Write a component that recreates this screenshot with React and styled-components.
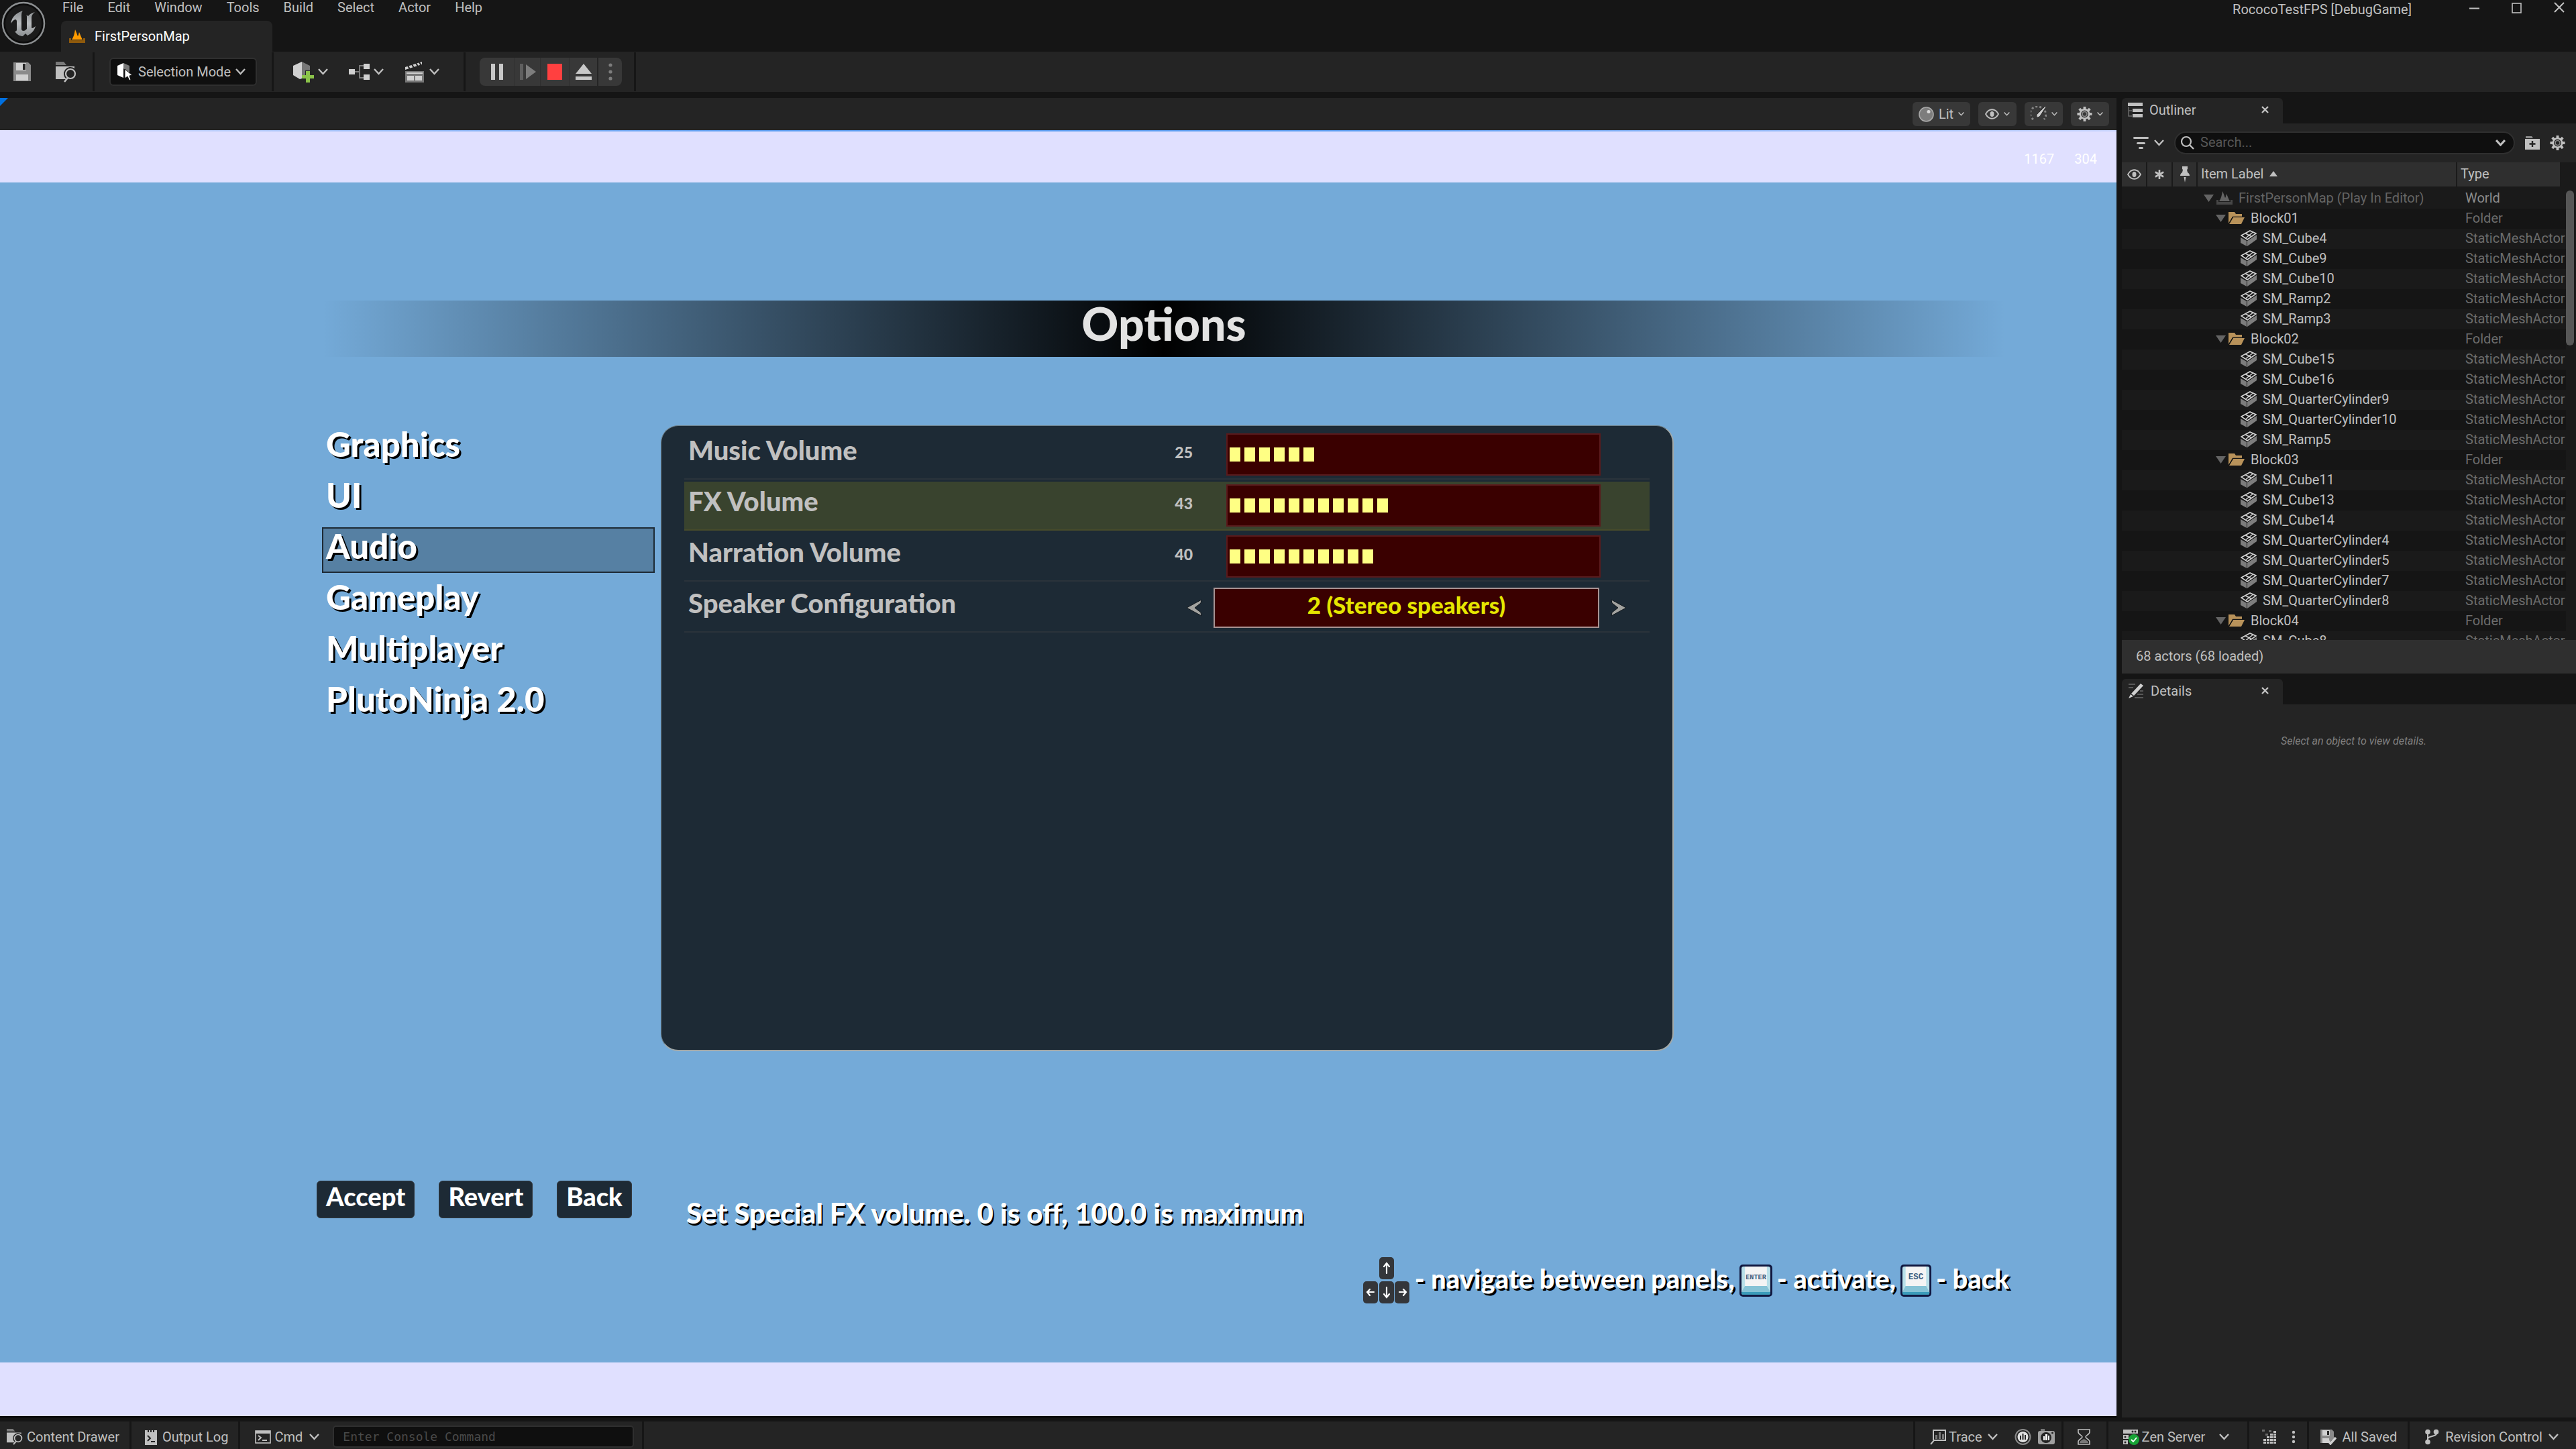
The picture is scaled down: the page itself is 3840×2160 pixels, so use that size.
import styled, { createGlobalStyle, css } from "styled-components"

const GRAY = "#c0c0c0"

const meshes = (names) => names.map((name) => ({ kind: "mesh", name, type: "StaticMeshActor" }))
const folder = (name) => ({ kind: "folder", name, type: "Folder" })

const actors = [
    { kind: "world", name: "FirstPersonMap (Play In Editor)", type: "World" },
    folder("Block01"),
    ...meshes(["SM_Cube4", "SM_Cube9", "SM_Cube10", "SM_Ramp2", "SM_Ramp3"]),
    folder("Block02"),
    ...meshes(["SM_Cube15", "SM_Cube16", "SM_QuarterCylinder9", "SM_QuarterCylinder10", "SM_Ramp5"]),
    folder("Block03"),
    ...meshes([
        "SM_Cube11", "SM_Cube13", "SM_Cube14", "SM_QuarterCylinder4",
        "SM_QuarterCylinder5", "SM_QuarterCylinder7", "SM_QuarterCylinder8",
    ]),
    folder("Block04"),
    ...meshes(["SM_Cube8"]),
]

const sliders = [
    { id: "music", label: "Music Volume", value: 25, bars: 6 },
    { id: "fx", label: "FX Volume", value: 43, bars: 11, active: true },
    { id: "narration", label: "Narration Volume", value: 40, bars: 10 },
]

const menu = ["File", "Edit", "Window", "Tools", "Build", "Select", "Actor", "Help"]
const pages = ["Graphics", "UI", "Audio", "Gameplay", "Multiplayer", "PlutoNinja 2.0"]

export default function App() {
    return (
        <>
            <GlobalStyle />
            <Editor>
                <TitleBar>
                    <LogoCell><UnrealLogo /></LogoCell>
                    <TitleLeft>
                        <MenuBar>
                            {menu.map((m) => <MenuItem key={m} type="button">{m}</MenuItem>)}
                        </MenuBar>
                        <LevelTab type="button">
                            <LevelIcon color="#ff9c00" base="#8f5a0c" />
                            FirstPersonMap
                        </LevelTab>
                    </TitleLeft>
                    <ProjectName>RococoTestFPS [DebugGame]</ProjectName>
                    <WindowControls>
                        <button type="button" aria-label="Minimize">
                            <svg width="15" height="20"><path d="M0 10.5h15" stroke={GRAY} strokeWidth="2" /></svg>
                        </button>
                        <button type="button" aria-label="Maximize">
                            <svg width="15" height="20"><rect x="1" y="3" width="13" height="14" fill="none" stroke={GRAY} strokeWidth="1.6" /></svg>
                        </button>
                        <button type="button" aria-label="Close">
                            <svg width="16" height="20"><path d="M1 2l14 14M15 2L1 16" stroke={GRAY} strokeWidth="2" /></svg>
                        </button>
                    </WindowControls>
                </TitleBar>

                <Toolbar>
                    <ToolGroup $left={20} $right={24} $gap={37}>
                        <button type="button" aria-label="Save"><SaveIcon /></button>
                        <button type="button" aria-label="Browse"><BrowseIcon /></button>
                    </ToolGroup>
                    <ToolGroup $left={22} $right={22}>
                        <ModeButton type="button">
                            <ModeIcon />
                            <span>Selection Mode</span>
                            <Chevron />
                        </ModeButton>
                    </ToolGroup>
                    <ToolGroup $left={29} $right={36} $gap={31}>
                        <ToolButton type="button" aria-label="Add"><AddIcon /><Chevron /></ToolButton>
                        <ToolButton type="button" aria-label="Blueprints"><BlueprintIcon /><Chevron /></ToolButton>
                        <ToolButton type="button" aria-label="Cinematics"><ClapperIcon /><Chevron /></ToolButton>
                    </ToolGroup>
                    <ToolGroup $left={21} $right={18}>
                        <PlayControls>
                            <PlayButton type="button" aria-label="Pause" $width={52}>
                                <svg width="18" height="24"><path d="M0 0h6v24H0zM12 0h6v24h-6z" fill="#c8c8c8" /></svg>
                            </PlayButton>
                            <PlayButton type="button" aria-label="Step" $width={38}>
                                <svg width="24" height="24"><path d="M0 0h5v24H0z" fill="#5f5f5f" /><path d="M9 1v22l15-11z" fill="#7d7d7d" /></svg>
                            </PlayButton>
                            <PlayButton type="button" aria-label="Stop" $width={43}>
                                <svg width="22" height="24"><rect width="22" height="24" fill="#ff4040" /></svg>
                            </PlayButton>
                            <PlayButton type="button" aria-label="Eject" $width={42}>
                                <svg width="24" height="24"><path d="M12 0l12 15H0zM0 19h24v5H0z" fill="#c8c8c8" /></svg>
                            </PlayButton>
                            <PlayButton type="button" aria-label="More" $width={37}>
                                <svg width="6" height="28"><g fill="#7d7d7d"><circle cx="3" cy="4" r="2.6" /><circle cx="3" cy="14" r="2.6" /><circle cx="3" cy="24" r="2.6" /></g></svg>
                            </PlayButton>
                        </PlayControls>
                    </ToolGroup>
                </Toolbar>

                <Workspace>
                    <Viewport>
                        <ViewportBar>
                            <svg width="12" height="12"><path d="M0 0h12L0 12z" fill="#0070e0" /></svg>
                            <ViewOptions>
                                <ViewButton type="button" $width={86}><LitIcon />Lit<Chevron small /></ViewButton>
                                <ViewButton type="button" $width={57} aria-label="Show"><EyeIcon /><Chevron small /></ViewButton>
                                <ViewButton type="button" $width={57} aria-label="Performance"><GaugeIcon /><Chevron small /></ViewButton>
                                <ViewButton type="button" $width={57} aria-label="Viewport settings"><GearIcon /><Chevron small /></ViewButton>
                            </ViewOptions>
                        </ViewportBar>
                        <Letterbox $top>
                            <span>1167</span>
                            <span>304</span>
                        </Letterbox>
                        <GameScreen>
                            <Banner>Options</Banner>
                            <OptionsBody>
                                <PageNav>
                                    {pages.map((p) => (
                                        <PageButton key={p} type="button" $selected={p === "Audio"}>{p}</PageButton>
                                    ))}
                                </PageNav>
                                <OptionsPanel>
                                    {sliders.map((s) => (
                                        <OptionRow key={s.id} $active={s.active}>
                                            <label htmlFor={s.id}>{s.label}</label>
                                            <OptionValue>{s.value}</OptionValue>
                                            <VolumeSlider id={s.id} type="range" min="0" max="100" defaultValue={s.value} $bars={s.bars} />
                                        </OptionRow>
                                    ))}
                                    <OptionRow>
                                        <label htmlFor="speakers">Speaker Configuration</label>
                                        <button type="button" aria-label="Previous">
                                            <svg width="24" height="26"><path d="M23 1L1 13l22 12-1-5-9-7 9-7z" fill="#a3a3a0" stroke="#12181d" strokeWidth="1" /></svg>
                                        </button>
                                        <Choice id="speakers">2 (Stereo speakers)</Choice>
                                        <button type="button" aria-label="Next">
                                            <svg width="24" height="26"><path d="M1 1l22 12L1 25l1-5 9-7-9-7z" fill="#a3a3a0" stroke="#12181d" strokeWidth="1" /></svg>
                                        </button>
                                    </OptionRow>
                                </OptionsPanel>
                            </OptionsBody>
                            <ScreenFooter>
                                <FooterButtons>
                                    <GameButton type="button">Accept</GameButton>
                                    <GameButton type="button">Revert</GameButton>
                                    <GameButton type="button">Back</GameButton>
                                </FooterButtons>
                                <Description>Set Special FX volume. 0 is off, 100.0 is maximum</Description>
                            </ScreenFooter>
                            <Hints>
                                <ArrowKeys />
                                <span>- navigate between panels,</span>
                                <KeyCap label="ENTER" />
                                <span>- activate,</span>
                                <KeyCap label="ESC" />
                                <span>- back</span>
                            </Hints>
                        </GameScreen>
                        <Letterbox />
                    </Viewport>

                    <SidePanels>
                        <Panel>
                            <PanelTab>
                                <OutlinerIcon />
                                <span>Outliner</span>
                                <CloseButton />
                            </PanelTab>
                            <SearchRow>
                                <FilterButton type="button" aria-label="Filter">
                                    <svg width="23" height="19" fill={GRAY}><rect width="23" height="3" rx="1.5" /><rect x="5" y="8" width="13" height="3" rx="1.5" /><rect x="8" y="15" width="7" height="3" rx="1.5" /></svg>
                                    <Chevron />
                                </FilterButton>
                                <SearchBox>
                                    <svg width="22" height="22"><circle cx="9" cy="9" r="7" fill="none" stroke={GRAY} strokeWidth="2.2" /><path d="M14 14l6 6" stroke={GRAY} strokeWidth="2.4" /></svg>
                                    <input type="text" placeholder="Search..." aria-label="Search actors" />
                                    <Chevron bold />
                                </SearchBox>
                                <button type="button" aria-label="New folder"><NewFolderIcon /></button>
                                <button type="button" aria-label="Outliner settings"><GearIcon /></button>
                            </SearchRow>
                            <ActorList>
                                <ActorTable>
                                    <colgroup>
                                        <col width="38" /><col width="38" /><col width="37" /><col width="387" /><col />
                                    </colgroup>
                                    <thead>
                                        <tr>
                                            <IconHead aria-label="Visibility"><EyeIcon /></IconHead>
                                            <IconHead aria-label="Unsaved">
                                                <svg width="14" height="14" viewBox="0 0 16 16"><path d="M8 0v16M1 4l14 8M15 4L1 12" stroke={GRAY} strokeWidth="3" /></svg>
                                            </IconHead>
                                            <IconHead aria-label="Pinned">
                                                <svg width="14" height="24" fill={GRAY}><path d="M3 0h8v4l-1 1 1 4c2 1 3 3 3 5H0c0-2 1-4 3-5l1-4-1-1zM5.500 16h3L7 24z" /></svg>
                                            </IconHead>
                                            <TextHead>Item Label <svg width="12" height="8"><path d="M6 0l6 8H0z" fill={GRAY} /></svg></TextHead>
                                            <TextHead>Type</TextHead>
                                        </tr>
                                    </thead>
                                    <tbody>
                                        {actors.map((a) => (
                                            <tr key={a.name}>
                                                <td /><td /><td />
                                                <td>
                                                    <ActorName $kind={a.kind}>
                                                        {a.kind !== "mesh" && <svg width="15" height="11"><path d="M0 0h15L7.500 11z" fill="#646464" /></svg>}
                                                        {a.kind === "world" && <LevelIcon color="#646464" base="#464646" />}
                                                        {a.kind === "folder" && <FolderIcon />}
                                                        {a.kind === "mesh" && <MeshIcon />}
                                                        <span>{a.name}</span>
                                                    </ActorName>
                                                </td>
                                                <ActorType $bright={a.kind === "world"}>{a.type}</ActorType>
                                            </tr>
                                        ))}
                                    </tbody>
                                </ActorTable>
                                <ScrollTrack><ScrollThumb /></ScrollTrack>
                            </ActorList>
                            <ActorCount>68 actors (68 loaded)</ActorCount>
                        </Panel>
                        <Panel>
                            <PanelTab>
                                <DetailsIcon />
                                <span>Details</span>
                                <CloseButton />
                            </PanelTab>
                            <DetailsBody>Select an object to view details.</DetailsBody>
                        </Panel>
                    </SidePanels>
                </Workspace>

                <StatusBar>
                    <StatusGroup $left={10} $right={15}>
                        <StatusButton type="button"><BrowseIcon size={24} />Content Drawer</StatusButton>
                    </StatusGroup>
                    <StatusGroup $left={20} $right={15}>
                        <StatusButton type="button" $gap={8}><LogIcon />Output Log</StatusButton>
                    </StatusGroup>
                    <StatusGroup $left={22} $right={12} $gap={20}>
                        <StatusButton type="button" $gap={5}><CmdIcon />Cmd<ChevronGap /><Chevron /></StatusButton>
                        <ConsoleInput type="text" placeholder="Enter Console Command" aria-label="Console command" />
                    </StatusGroup>
                    <Spacer />
                    <StatusGroup $left={22} $right={10} $gap={10}>
                        <StatusButton type="button" $gap={4}><TraceIcon />Trace<ChevronGap /><Chevron /></StatusButton>
                        <ChevronGap $size={5} />
                        <button type="button" aria-label="Record trace"><RecordIcon /></button>
                        <button type="button" aria-label="Trace snapshot"><SnapshotIcon /></button>
                    </StatusGroup>
                    <StatusGroup $left={21} $right={24}>
                        <button type="button" aria-label="Pending work"><HourglassIcon /></button>
                    </StatusGroup>
                    <StatusGroup $left={22} $right={27}>
                        <StatusButton type="button" $gap={4}><ServerIcon />Zen Server<ChevronGap $size={13} /><Chevron /></StatusButton>
                    </StatusGroup>
                    <StatusGroup $left={19} $right={17} $gap={22}>
                        <button type="button" aria-label="Derived data"><PixelsIcon /></button>
                        <button type="button" aria-label="More">
                            <svg width="6" height="20" fill={GRAY}><circle cx="3" cy="3" r="2.2" /><circle cx="3" cy="10" r="2.2" /><circle cx="3" cy="17" r="2.2" /></svg>
                        </button>
                    </StatusGroup>
                    <StatusGroup $left={17} $right={16}>
                        <StatusButton type="button" $gap={8}><SavedIcon />All Saved</StatusButton>
                    </StatusGroup>
                    <StatusGroup $left={22} $right={26} $last>
                        <StatusButton type="button" $gap={9}><BranchIcon />Revision Control<Chevron /></StatusButton>
                    </StatusGroup>
                </StatusBar>
            </Editor>
        </>
    )
}

function Chevron({ small, bold }) {
    const w = small ? 9 : 15
    const h = small ? 6 : 10
    return (
        <svg width={w} height={h} viewBox="0 0 15 10">
            <path d="M1 1l6.500 7L14 1" fill="none" stroke={GRAY} strokeWidth={bold ? 3.2 : 2.4} />
        </svg>
    )
}

function CloseButton() {
    return (
        <TabClose type="button" aria-label="Close tab">
            <svg width="11" height="11"><path d="M1 1l9 9M10 1l-9 9" stroke={GRAY} strokeWidth="2.400" /></svg>
        </TabClose>
    )
}

function UnrealLogo() {
    return (
        <svg width="66" height="66" viewBox="0 0 66 66">
            <defs>
                <linearGradient id="metal" x1="0" y1="0" x2="0" y2="1">
                    <stop offset="0" stopColor="#8b8f92" />
                    <stop offset="0.5" stopColor="#b9bcbe" />
                    <stop offset="1" stopColor="#8b8f92" />
                </linearGradient>
            </defs>
            <circle cx="33" cy="33" r="31" fill="#0d0d0d" stroke="#8c8f91" strokeWidth="2.500" />
            <circle cx="33" cy="33" r="27" fill="#1b1b1b" />
            <path
                d="M32 14c-9 3-16 8-18 19 3-4 5-6 7-6 1 0 2 1 2 3v12c0 2-1 3-3 3 4 5 8 7 12 7l4-4 3 3c6-3 10-7 12-14-2 2-4 3-5 3s-1-1-1-2V24c0-3 2-6 5-8-4 1-8 3-10 6l-3-2c1 1 1 2 1 4v17c-2 2-3 3-5 3s-3-1-3-3V23c0-4 0-7 2-9z"
                fill="url(#metal)"
            />
        </svg>
    )
}

function LevelIcon({ color, base }) {
    return (
        <svg width="24" height="20" viewBox="0 0 24 20">
            <path d="M4 15C7 11 8 6 9 0c2 4 3 8 4 10 1-1 1-3 2-6 2 4 3 8 5 11z" fill={color} />
            <path d="M0 13h3v3h18v-3h3v7H0z" fill={base} />
        </svg>
    )
}

function SaveIcon() {
    return (
        <svg width="26" height="28" viewBox="0 0 26 28">
            <path d="M0 0h22l4 4v24H0z" fill="#8a8a8a" />
            <path d="M4 1h15v11H4zM4 18h18v9H4z" fill="#d0d0d0" />
            <path d="M14 2h4v9h-4z" fill="#242424" />
        </svg>
    )
}

function BrowseIcon({ size = 31 }) {
    return (
        <svg width={size} height={size} viewBox="0 0 31 31">
            <path d="M0 5V0h12l4 5z" fill="#7a7a7a" />
            <path d="M0 7h28v3a10 10 0 0 0-12 16H0z" fill={GRAY} />
            <circle cx="22" cy="18" r="7" fill="none" stroke={GRAY} strokeWidth="2.200" />
            <path d="M18 24l-5 6" stroke={GRAY} strokeWidth="2.600" />
        </svg>
    )
}

function ModeIcon() {
    return (
        <svg width="24" height="26" viewBox="0 0 24 26">
            <path d="M0 4L9 0v22l-9-4z" fill="#fff" />
            <path d="M9 0l9 4v12L9 8z" fill="#777" />
            <path d="M11 9v14l4-3 3 6 2-1-2-6 4-1z" fill="#fff" stroke="#0f0f0f" strokeWidth="1" />
        </svg>
    )
}

function AddIcon() {
    return (
        <svg width="31" height="31" viewBox="0 0 31 31">
            <path d="M0 6l13-6v25l-3 1L0 20z" fill="#d0d0d0" />
            <path d="M13 0l12 6v7h-7v7h-5z" fill="#777" />
            <path d="M19 14h6v6h6v5h-6v6h-6v-6h-6v-5h6z" fill="#8bc34a" />
        </svg>
    )
}

function BlueprintIcon() {
    return (
        <svg width="31" height="24" viewBox="0 0 31 24">
            <path d="M9 12h6M22 3h-6v18h6" fill="none" stroke="#808080" strokeWidth="1.800" />
            <path d="M0 8h9v8H0zM22 0h9v8h-9zM22 16h9v8h-9z" fill="#d0d0d0" />
        </svg>
    )
}

function ClapperIcon() {
    return (
        <svg width="31" height="31" viewBox="0 0 31 31">
            <path d="M1 8l25-8v4L1 12z" fill="#d0d0d0" />
            <path d="M5 6l3 5M11 4l3 5M17 2l3 5M22 1l3 5" stroke="#242424" strokeWidth="2" />
            <path d="M1 14h28v17H1z" fill="#777" />
            <path d="M3 16h24v2H3zM4 21h10v7H4zM16 21h10v7H16z" fill="#d0d0d0" />
        </svg>
    )
}

function LitIcon() {
    return (
        <svg width="23" height="23" viewBox="0 0 23 23">
            <circle cx="11.500" cy="11.500" r="10.500" fill="#7d7d7d" stroke="#a8a8a8" strokeWidth="1.600" />
            <circle cx="15" cy="7.500" r="2.500" fill="#dadada" />
        </svg>
    )
}

function EyeIcon() {
    return (
        <svg width="21" height="16" viewBox="0 0 21 16">
            <path d="M1 8c5-9 14-9 19 0-5 9-14 9-19 0z" fill="none" stroke={GRAY} strokeWidth="1.800" />
            <ellipse cx="10.500" cy="8" rx="3" ry="4" fill={GRAY} />
        </svg>
    )
}

function GaugeIcon() {
    return (
        <svg width="24" height="24" viewBox="0 0 24 24">
            <path d="M4 20A10.500 10.500 0 0 1 16 2.500M21 7a10.500 10.500 0 0 1-1 13" fill="none" stroke="#858585" strokeWidth="3" strokeDasharray="3 3" />
            <path d="M22 1L10 13v3l3-1z" fill="#d0d0d0" stroke="#d0d0d0" />
        </svg>
    )
}

function GearIcon() {
    const teeth = [0, 45, 90, 135, 180, 225, 270, 315]
    return (
        <svg width="23" height="24" viewBox="-12 -12 24 24">
            {teeth.map((t) => <rect key={t} x="-2" y="-11.500" width="4" height="5" fill={GRAY} transform={`rotate(${t})`} />)}
            <circle r="7" fill="none" stroke={GRAY} strokeWidth="2.600" />
            <circle r="3.600" fill="none" stroke="#8a8a8a" strokeWidth="1.600" />
        </svg>
    )
}

function OutlinerIcon() {
    return (
        <svg width="22" height="22" viewBox="0 0 22 22">
            <path d="M1 6v14h5M1 12h5" fill="none" stroke="#6a6a6a" strokeWidth="1.500" />
            <path d="M0 0h22v5H0zM7 9h15v5H7zM7 17h15v5H7z" fill={GRAY} />
        </svg>
    )
}

function DetailsIcon() {
    return (
        <svg width="24" height="22" viewBox="0 0 24 22">
            <path d="M1 1h10M1 6h7M18 11h5M14 16h9M10 21h13" stroke="#6a6a6a" strokeWidth="1.600" />
            <path d="M19 0l4 3L9 18l-4-3zM4 16l4 3-7 3z" fill="#d0d0d0" />
        </svg>
    )
}

function NewFolderIcon() {
    return (
        <svg width="22" height="20" viewBox="0 0 22 20">
            <path d="M1 0h9l2 3H1z" fill="#8a8a8a" />
            <path d="M0 4h22v16H0z" fill={GRAY} />
            <path d="M11 7v9M6.500 11.500h9" stroke="#242424" strokeWidth="2.400" />
        </svg>
    )
}

function FolderIcon() {
    return (
        <svg width="24" height="18" viewBox="0 0 24 18">
            <path d="M0 17V0h9l2 3h9v4H6z" fill="#b8925a" />
            <path d="M7 8h17l-5 10H1z" fill="#b8925a" />
            <path d="M1 17L6.500 7.400H22" fill="none" stroke="#151515" strokeWidth="1.200" />
        </svg>
    )
}

function MeshIcon() {
    return (
        <svg width="24" height="24" viewBox="0 0 24 24">
            <path d="M0 11l9 5v8l-9-5zM10 16l14-9v7l-14 10z" fill="#7d7d7d" />
            <path d="M1 8L14 1l9 4-13 9zM7 4.800l9 4.700M8 11.500l10-8" fill="none" stroke="#d0d0d0" strokeWidth="1.600" />
        </svg>
    )
}

function LogIcon() {
    return (
        <svg width="18" height="24" viewBox="0 0 18 24">
            <path d="M0 2h18v22H0z" fill={GRAY} />
            <path d="M5 0v5M9 0v5M13 0v5" stroke="#242424" strokeWidth="2" />
            <path d="M4 10l4 4-4 4M9 19h6" fill="none" stroke="#242424" strokeWidth="2" />
        </svg>
    )
}

function CmdIcon() {
    return (
        <svg width="24" height="20" viewBox="0 0 24 20">
            <rect x="1" y="1" width="22" height="18" fill="none" stroke={GRAY} strokeWidth="1.600" />
            <path d="M1 1h22v4H1z" fill={GRAY} />
            <path d="M5 8l4 3-4 4M11 15h7" fill="none" stroke={GRAY} strokeWidth="2" />
        </svg>
    )
}

function TraceIcon() {
    return (
        <svg width="24" height="24" viewBox="0 0 24 24">
            <path d="M5 17V2h18v15H6L1 23" fill="none" stroke={GRAY} strokeWidth="2" />
            <path d="M8 9h3v6H8zM13 5h3v10h-3zM18 8h3v7h-3z" fill="#777" />
        </svg>
    )
}

function RecordIcon() {
    return (
        <svg width="25" height="24" viewBox="0 0 25 24">
            <circle cx="12.500" cy="12" r="11" fill="none" stroke="#8a8a8a" strokeWidth="2" />
            <circle cx="12.500" cy="12" r="8" fill="#e0e0e0" />
            <path d="M8 10h2v6H8zM11.500 7h2v9h-2zM15 9h2v7h-2z" fill="#242424" />
        </svg>
    )
}

function SnapshotIcon() {
    return (
        <svg width="25" height="24" viewBox="0 0 25 24">
            <path d="M4 0h6v3H4z" fill="#777" />
            <rect y="3" width="25" height="20" rx="3" fill="#a0a0a0" />
            <circle cx="12" cy="13" r="8" fill="#242424" />
            <path d="M8 11h2v6H8zM11 8h3v9h-3zM15 10h2v7h-2z" fill="#fff" />
            <circle cx="21.500" cy="6" r="1.500" fill="#242424" />
        </svg>
    )
}

function HourglassIcon() {
    return (
        <svg width="19" height="24" viewBox="0 0 19 24">
            <path d="M1 1h17v4c0 3-6 5-6 7s6 4 6 7v4H1v-4c0-3 6-5 6-7S1 8 1 5z" fill="none" stroke={GRAY} strokeWidth="1.600" />
            <path d="M3 21c0-3 3-4 6.500-6 3.500 2 6.500 3 6.500 6z" fill="#777" />
        </svg>
    )
}

function ServerIcon() {
    return (
        <svg width="24" height="24" viewBox="0 0 24 24">
            <path d="M0 1h22v6H0zM0 9h8v6H0zM0 17h7v6H0z" fill={GRAY} />
            <circle cx="14" cy="4" r="1.500" fill="#242424" /><circle cx="18" cy="4" r="1.500" fill="#242424" />
            <circle cx="3" cy="12" r="1.500" fill="#242424" /><circle cx="3" cy="20" r="1.500" fill="#242424" />
            <circle cx="16" cy="16" r="8" fill="#17a336" />
            <path d="M12 16l3 3 5-6" fill="none" stroke="#fff" strokeWidth="1.800" />
        </svg>
    )
}

function PixelsIcon() {
    const rows = [[1, 1, 1, 1], [1, 1, 1, 1], [0, 1, 1, 1], [0, 0, 1, 1], [0, 0, 0, 1]]
    return (
        <svg width="22" height="24" viewBox="0 0 22 24">
            {rows.map((row, y) => row.map((on, x) => (
                on ? <rect key={`${x}-${y}`} x={2 + x * 5} y={19 - y * 4} width="4" height="3" fill={GRAY} /> : null
            )))}
            <path d="M0 1h4v3H0zM5 7h4v3H5zM10 2h4v3h-4z" fill="#6a6a6a" />
        </svg>
    )
}

function SavedIcon() {
    return (
        <svg width="24" height="24" viewBox="0 0 24 24">
            <path d="M0 1h17l3 3v10l-7 7H0z" fill="#8a8a8a" />
            <path d="M3 2h11v8H3zM3 14h10v7H3z" fill="#d0d0d0" />
            <path d="M10 3h3v6h-3z" fill="#242424" />
            <path d="M11 17l4 5 8-9" fill="none" stroke="#d0d0d0" strokeWidth="3.400" />
        </svg>
    )
}

function BranchIcon() {
    return (
        <svg width="22" height="24" viewBox="0 0 22 24">
            <path d="M5 5v15M18 5v2c0 5-13 3-13 8" fill="none" stroke={GRAY} strokeWidth="2" />
            <circle cx="5" cy="4.500" r="3.800" fill={GRAY} /><circle cx="17.500" cy="4.500" r="3.800" fill={GRAY} /><circle cx="5" cy="19.500" r="3.800" fill={GRAY} />
        </svg>
    )
}

function ArrowKeys() {
    return (
        <svg width="70" height="69" viewBox="0 0 70 69">
            <g fill="#34363a">
                <rect x="24" y="0" width="22" height="33" rx="5" />
                <rect x="0" y="36" width="22" height="33" rx="5" />
                <rect x="24" y="36" width="22" height="33" rx="5" />
                <rect x="47" y="36" width="22" height="33" rx="5" />
            </g>
            <g fill="none" stroke="#fff" strokeWidth="2.200" strokeLinecap="round">
                <path d="M35 24V10M31 14l4-5 4 5" />
                <path d="M35 45v14M31 55l4 5 4-5" />
                <path d="M16 52H7M10 48l-4 4 4 5" />
                <path d="M54 52h9M60 48l4 4-4 5" />
            </g>
        </svg>
    )
}

function KeyCap({ label }) {
    const wide = label.length > 3
    return (
        <svg width={wide ? 49 : 46} height="50" viewBox="0 0 48 50" preserveAspectRatio="none">
            <rect x="0" y="1" width="48" height="48" rx="5" fill="#10173f" />
            <rect x="3" y="4" width="42" height="42" rx="3" fill="#b9e0e9" />
            <path d="M8 4h32v29H8z" fill="#f4f4f4" />
            <path d="M8 33h32l5 9v1H3v-1z" fill="#86c3d6" />
            <path d="M3 42h42v2a2 2 0 0 1-2 2H5a2 2 0 0 1-2-2z" fill="#3b9cba" />
            <text x="24" y="23" textAnchor="middle" fontFamily="Liberation Mono, monospace" fontWeight="700" fontSize={wide ? 10 : 13} fill="#3d5f80">{label}</text>
        </svg>
    )
}

const GlobalStyle = createGlobalStyle`
    * {
        box-sizing: border-box;
    }
    body {
        margin: 0;
        background: #151515;
        color: ${GRAY};
        font-family: Roboto, sans-serif;
        font-size: 20px;
        line-height: 24px;
    }
    button, input {
        font: inherit;
        color: inherit;
    }
    button {
        display: flex;
        align-items: center;
        padding: 0;
        border: none;
        background: none;
        white-space: nowrap;
    }
    svg {
        display: block;
        flex: none;
    }
`

const Editor = styled.div`
    display: flex;
    flex-direction: column;
    height: 100vh;
    overflow: hidden;
`

const TitleBar = styled.header`
    display: flex;
    align-items: flex-start;
    height: 77px;
    flex: none;
    padding-right: 17px;
`
const LogoCell = styled.div`
    width: 91px;
    padding: 2px;
`
const TitleLeft = styled.div`
    flex: 1;
`
const MenuBar = styled.nav`
    display: flex;
    gap: 36px;
    height: 31px;
    padding-left: 2px;
`
const MenuItem = styled.button`
    height: 22px;
`
const LevelTab = styled.button`
    width: 315px;
    height: 46px;
    gap: 14px;
    padding-left: 12px;
    border-radius: 8px 8px 0 0;
    background: #242424;
    color: #fff;
`
const ProjectName = styled.div`
    line-height: 28px;
    margin-right: 86px;
`
const WindowControls = styled.div`
    display: flex;
    gap: 48px;
    padding-top: 2px;
`

const Toolbar = styled.div`
    display: flex;
    flex: none;
    height: 60px;
    padding: 1px 0;
    background: #242424;
`
const ToolGroup = styled.div`
    display: flex;
    align-items: center;
    gap: ${(p) => p.$gap || 0}px;
    padding: 0 ${(p) => p.$right}px 0 ${(p) => p.$left}px;
    border-right: 3px solid #161616;
`
const ToolButton = styled.button`
    gap: 6px;
`
const ModeButton = styled.button`
    width: 220px;
    height: 42px;
    gap: 7px;
    padding-left: 10px;
    border: 2px solid #2f2f2f;
    border-radius: 6px;
    background: #0f0f0f;
`
const PlayControls = styled.div`
    display: flex;
    height: 42px;
    border-radius: 8px;
    background: #383838;
`
const PlayButton = styled.button`
    justify-content: center;
    width: ${(p) => p.$width}px;
    & + & {
        border-left: 1px solid #2f2f2f;
    }
    &:last-child {
        border-left: 2px solid #242424;
    }
`

const Workspace = styled.main`
    display: flex;
    gap: 8px;
    flex: 1;
    min-height: 0;
    padding: 9px 0 6px;
`
const Viewport = styled.section`
    display: flex;
    flex-direction: column;
    flex: 1;
    min-width: 0;
    border-bottom: 2px solid #000;
`
const ViewportBar = styled.div`
    display: flex;
    justify-content: space-between;
    flex: none;
    height: 48px;
    background: #242424;
`
const ViewOptions = styled.div`
    display: flex;
    align-items: center;
    gap: 12px;
    padding-right: 11px;
`
const ViewButton = styled.button`
    justify-content: center;
    gap: 7px;
    width: ${(p) => p.$width}px;
    height: 36px;
    border-radius: 6px;
    background: #383838;
`
const Letterbox = styled.div`
    display: flex;
    justify-content: flex-end;
    align-items: center;
    gap: 30px;
    flex: none;
    height: 80px;
    padding-right: 29px;
    background: #e0e0ff;
    color: #fff;
    ${(p) => p.$top && css`
        height: 78px;
        padding-top: 6px;
        border-top: 2px solid;
        border-image: linear-gradient(to right, #e0e0ff, #5c9df0 35%, #5c9df0 65%, #c8d4ff) 1;
    `}
`

/* in-game options screen */
const GameScreen = styled.div`
    display: flex;
    flex-direction: column;
    flex: 1;
    min-height: 0;
    padding: 176px 160px 88px 472px;
    background: #74aad8;
    color: #fff;
    font-family: Lato, sans-serif;
    font-weight: 900;
`
const Banner = styled.h1`
    flex: none;
    height: 84px;
    margin: 0 5px 102px 8px;
    background: linear-gradient(to right, transparent, #000, transparent);
    color: #e3e3e3;
    font-size: 68px;
    font-weight: 900;
    line-height: 68px;
    text-align: center;
`
const OptionsBody = styled.div`
    display: flex;
    gap: 9px;
    flex: 1;
    min-height: 0;
    padding: 0 500px 0 8px;
`
const PageNav = styled.nav`
    display: flex;
    flex-direction: column;
    gap: 8px;
    width: 496px;
`
const PageButton = styled.button`
    height: 68px;
    padding: 0 4px 12px;
    border: 2px solid transparent;
    font-size: 51px;
    line-height: 52px;
    text-shadow: 3px 3px 0 #000;
    ${(p) => p.$selected && css`
        border-color: #1d2a35;
        background: #5680a3;
    `}
`
const OptionsPanel = styled.section`
    flex: 1;
    padding: 7px 34px;
    border: 1px solid #6f8089;
    border-right: 2px solid #a3a9a8;
    border-bottom: 2px solid #a3a9a8;
    border-radius: 26px;
    background: #1d2a35;
    color: ${GRAY};
`
const OptionRow = styled.div`
    display: flex;
    align-items: center;
    height: 73px;
    margin-bottom: 3px;
    padding: 0 34px 0 6px;
    border-bottom: 2px solid #2a333b;
    font-size: 40px;
    label {
        flex: 1;
        padding-bottom: 14px;
        line-height: 44px;
    }
    ${(p) => p.$active && css`
        border-color: #474b2b;
        background: #39432e;
    `}
`
const OptionValue = styled.output`
    padding-bottom: 8px;
    margin-right: 50px;
    font-size: 23px;
`
const VolumeSlider = styled.input`
    appearance: none;
    width: 558px;
    height: 63px;
    margin: 0 39px 0 0;
    border: 2px solid #5a1a1c;
    background:
        repeating-linear-gradient(to right, #ffff84 0 16px, transparent 16px 22px) 3px center / ${(p) => p.$bars * 22}px 21px no-repeat,
        #3a0000;
    &::-webkit-slider-thumb {
        appearance: none;
        width: 0;
    }
`
const Choice = styled.output`
    width: 575px;
    height: 60px;
    margin: 0 17px;
    border: 2px solid #a89292;
    background: #3a0000;
    color: #e6e600;
    font-size: 35px;
    line-height: 46px;
    text-align: center;
`
const ScreenFooter = styled.div`
    display: grid;
    grid-template-columns: 551px 1fr;
    margin-top: 193px;
`
const FooterButtons = styled.div`
    display: flex;
    gap: 36px;
`
const GameButton = styled.button`
    height: 56px;
    padding: 0 13px 10px;
    border: 1px solid #33383d;
    border-radius: 6px;
    background: #1d2a35;
    font-size: 38px;
`
const Description = styled.p`
    margin: 24px 0 0;
    font-size: 42px;
    line-height: 48px;
    text-shadow: 2px 3px 0 #000;
`
const Hints = styled.div`
    display: flex;
    justify-content: flex-end;
    align-items: center;
    gap: 7px;
    height: 69px;
    margin-top: 42px;
    font-size: 40px;
    text-shadow: 3px 3px 0 #000;
    span {
        padding-bottom: 6px;
    }
    svg {
        text-shadow: none;
    }
`

const SidePanels = styled.aside`
    display: grid;
    grid-template-rows: minmax(0, 858fr) minmax(0, 1101fr);
    gap: 8px;
    width: 677px;
`
const Panel = styled.section`
    display: flex;
    flex-direction: column;
    min-height: 0;
`
const PanelTab = styled.div`
    display: flex;
    align-items: center;
    gap: 10px;
    flex: none;
    width: 240px;
    height: 38px;
    padding: 0 21px 3px 9px;
    border-radius: 6px 6px 0 0;
    background: #242424;
`
const TabClose = styled.button`
    margin-left: auto;
`
const SearchRow = styled.div`
    display: flex;
    align-items: center;
    gap: 15px;
    flex: none;
    height: 58px;
    padding: 0 16px 0 17px;
    background: #242424;
`
const FilterButton = styled.button`
    gap: 8px;
`
const SearchBox = styled.div`
    display: flex;
    align-items: center;
    gap: 8px;
    flex: 1;
    height: 34px;
    padding: 0 12px 0 7px;
    border: 2px solid #2f2f2f;
    border-radius: 17px;
    background: #0f0f0f;
    input {
        flex: 1;
        min-width: 0;
        padding: 0 0 2px;
        border: none;
        background: none;
    }
    input::placeholder {
        color: #575757;
    }
`
const ActorList = styled.div`
    display: flex;
    flex: 1;
    min-height: 0;
    overflow: hidden;
    background: #1a1a1a;
`
const ActorTable = styled.table`
    flex: 1;
    align-self: flex-start;
    table-layout: fixed;
    border-collapse: separate;
    border-spacing: 0;
    th {
        height: 36px;
        padding: 0;
        background: #2f2f2f;
        border-right: 2px solid #1a1a1a;
        font-weight: 400;
        text-align: left;
    }
    th:last-child {
        border-right-width: 9px;
    }
    thead::after {
        content: "";
        display: block;
        height: 3px;
    }
    td {
        height: 30px;
        padding: 0;
        white-space: nowrap;
    }
    tbody tr:nth-child(even) {
        background: #151515;
    }
`
const IconHead = styled.th`
    svg {
        margin: 0 auto;
    }
`
const TextHead = styled.th`
    && {
        padding: 0 0 2px 5px;
    }
    svg {
        display: inline-block;
        margin: 0 0 3px 4px;
    }
`
const indent = { world: 9, folder: 27, mesh: 64 }
const ActorName = styled.div`
    display: flex;
    align-items: center;
    height: 30px;
    padding: 0 0 2px ${(p) => indent[p.$kind]}px;
    color: ${(p) => (p.$kind === "world" ? "#646464" : GRAY)};
    svg {
        margin-right: 4px;
    }
    span {
        margin-left: 5px;
    }
`
const ActorType = styled.td`
    && {
        padding: 0 0 2px 12px;
    }
    color: ${(p) => (p.$bright ? "#8c8c8c" : "#6c6c6c")};
`
const ScrollTrack = styled.div`
    flex: none;
    width: 15px;
    padding: 42px 3px 0 0;
`
const ScrollThumb = styled.div`
    height: 231px;
    border-radius: 6px;
    background: #575757;
`
const ActorCount = styled.div`
    flex: none;
    height: 50px;
    padding-left: 21px;
    background: #2f2f2f;
    line-height: 48px;
`
const DetailsBody = styled.div`
    flex: 1;
    padding: 43px 0 0 14px;
    background: #242424;
    color: #808080;
    font-size: 16px;
    font-style: italic;
    text-align: center;
`

const StatusBar = styled.footer`
    display: flex;
    flex: none;
    height: 41px;
    background: #242424;
`
const StatusGroup = styled.div`
    display: flex;
    align-items: center;
    gap: ${(p) => p.$gap || 0}px;
    padding: 4px ${(p) => p.$right}px 0 ${(p) => p.$left}px;
    border-right: ${(p) => (p.$last ? 0 : 3)}px solid #161616;
`
const StatusButton = styled.button`
    gap: ${(p) => p.$gap || 6}px;
`
const ChevronGap = styled.span`
    width: ${(p) => p.$size || 0}px;
`
const ConsoleInput = styled.input`
    width: 449px;
    height: 33px;
    padding: 0 13px;
    border: 2px solid #2f2f2f;
    border-radius: 5px;
    background: #0f0f0f;
    font-family: "DejaVu Sans Mono", monospace;
    font-size: 18px;
    &::placeholder {
        color: #4a4a4a;
    }
`
const Spacer = styled.div`
    flex: 1;
    border-right: 3px solid #161616;
`
